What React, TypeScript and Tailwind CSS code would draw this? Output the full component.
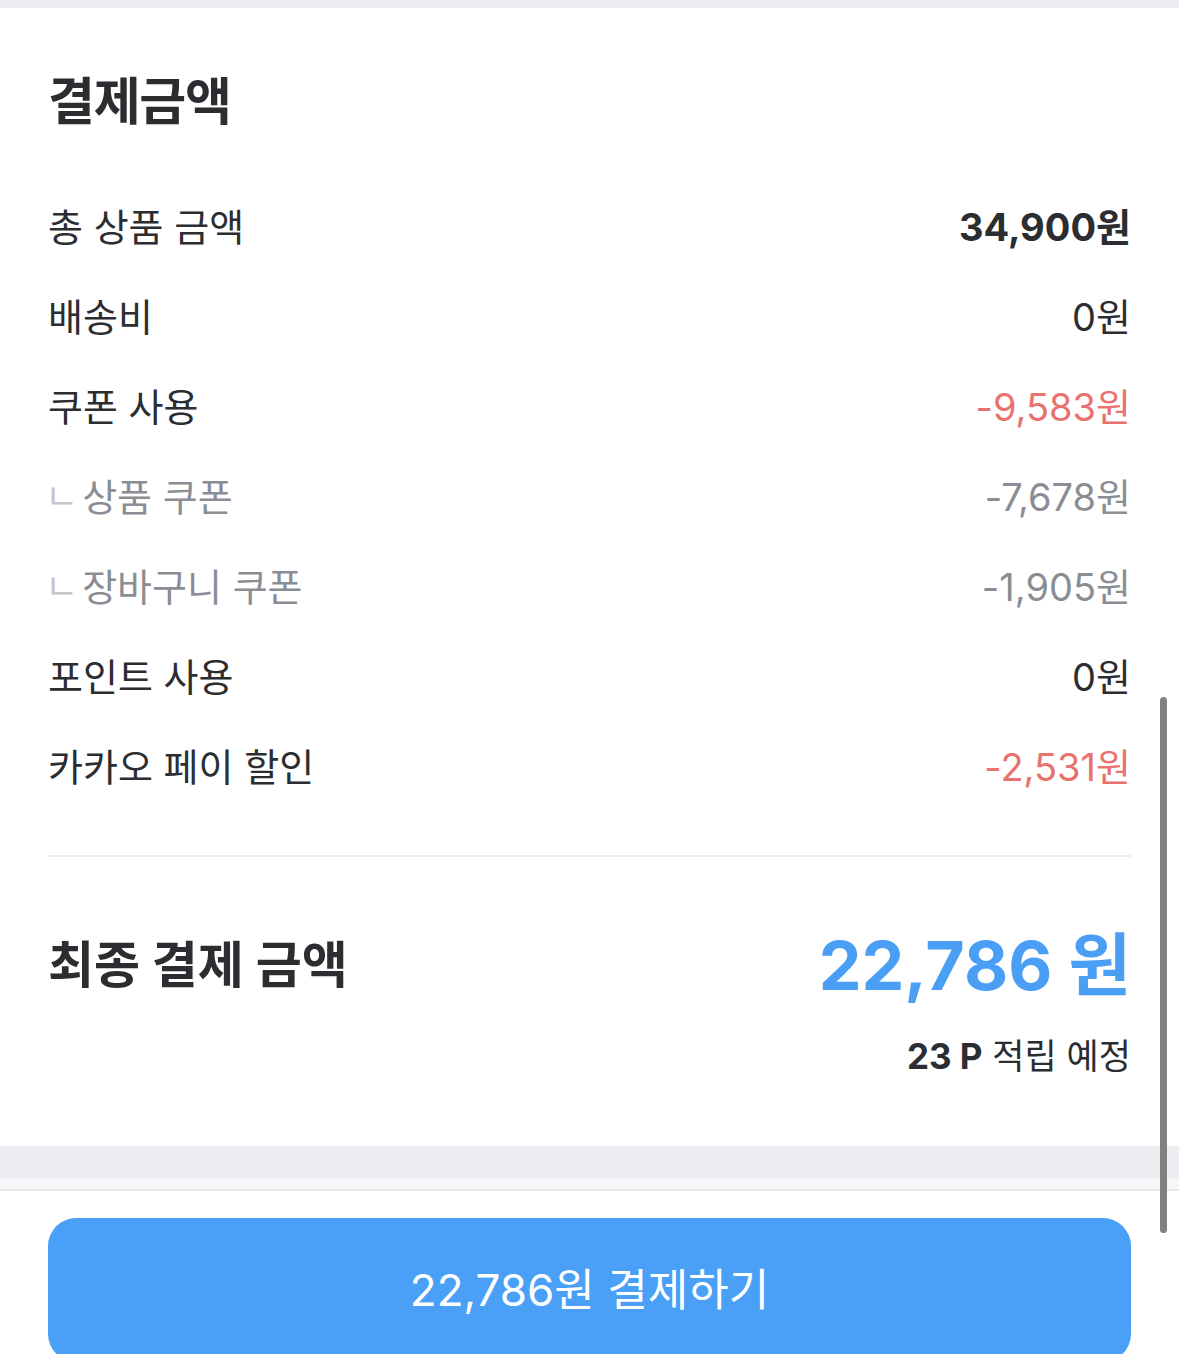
const font = { fontFamily: 'Inter, "Noto Sans CJK KR", "Noto Sans", sans-serif' };

type Row = { label: string; value: string; tone?: 'bold' | 'red' | 'sub' };

const rows: Row[] = [
  { label: '총 상품 금액', value: '34,900원', tone: 'bold' },
  { label: '배송비', value: '0원' },
  { label: '쿠폰 사용', value: '-9,583원', tone: 'red' },
  { label: '상품 쿠폰', value: '-7,678원', tone: 'sub' },
  { label: '장바구니 쿠폰', value: '-1,905원', tone: 'sub' },
  { label: '포인트 사용', value: '0원' },
  { label: '카카오 페이 할인', value: '-2,531원', tone: 'red' },
];

const valueClass = (tone?: Row['tone']) => {
  if (tone === 'bold') return 'font-bold text-[#2b2d31]';
  if (tone === 'red') return 'text-[#e8736e]';
  if (tone === 'sub') return 'text-[#8a8e94]';
  return 'text-[#2b2d31]';
};

export default function App() {
  return (
    <div className="relative min-h-screen bg-white text-[#2b2d31]" style={font}>
      <div className="h-2 bg-[#ebedf0]" />

      {/* 결제금액 */}
      <section className="px-12 pt-[65px] pb-[68px]">
        <h2 className="text-[51px] font-bold leading-[58px] tracking-tight">결제금액</h2>

        <div className="mt-[51px]">
          {rows.map((row) => (
            <div key={row.label} className="flex h-[90px] items-center justify-between text-[38px] leading-none">
              {row.tone === 'sub' ? (
                <div className="flex items-center text-[#8a8e94]">
                  <span className="-ml-[3px] mr-[4px] text-[36px] text-[#c3c6cb]">ㄴ</span>
                  <span>{row.label}</span>
                </div>
              ) : (
                <span>{row.label}</span>
              )}
              <span className={valueClass(row.tone)}>{row.value}</span>
            </div>
          ))}
        </div>

        <div className="mt-[43px] h-[2px] bg-[#ebecee]" />

        <div className="mt-[65px] flex items-center justify-between">
          <span className="text-[50px] font-bold leading-none">최종 결제 금액</span>
          <span className="text-[68px] font-bold leading-[86px] text-[#4a9ff5]">22,786 원</span>
        </div>
        <div className="mt-[26px] text-right text-[35px] leading-[44px]">
          <span className="font-bold">23 P</span> 적립 예정
        </div>
      </section>

      <div className="h-[33px] bg-[#ebedf0]" />
      <div className="h-3 border-b-2 border-[#e9eaec] bg-[#f6f7f9]" />

      <div className="px-12 pt-[27px]">
        <button className="flex h-[144px] w-full items-center justify-center rounded-[28px] bg-[#4aa0f6] text-[44px] text-white">
          22,786원 결제하기
        </button>
      </div>

      {/* scroll indicator */}
      <div className="absolute left-[1160px] top-[697px] h-[536px] w-[7px] rounded-full bg-[#808080]" />
    </div>
  );
}
